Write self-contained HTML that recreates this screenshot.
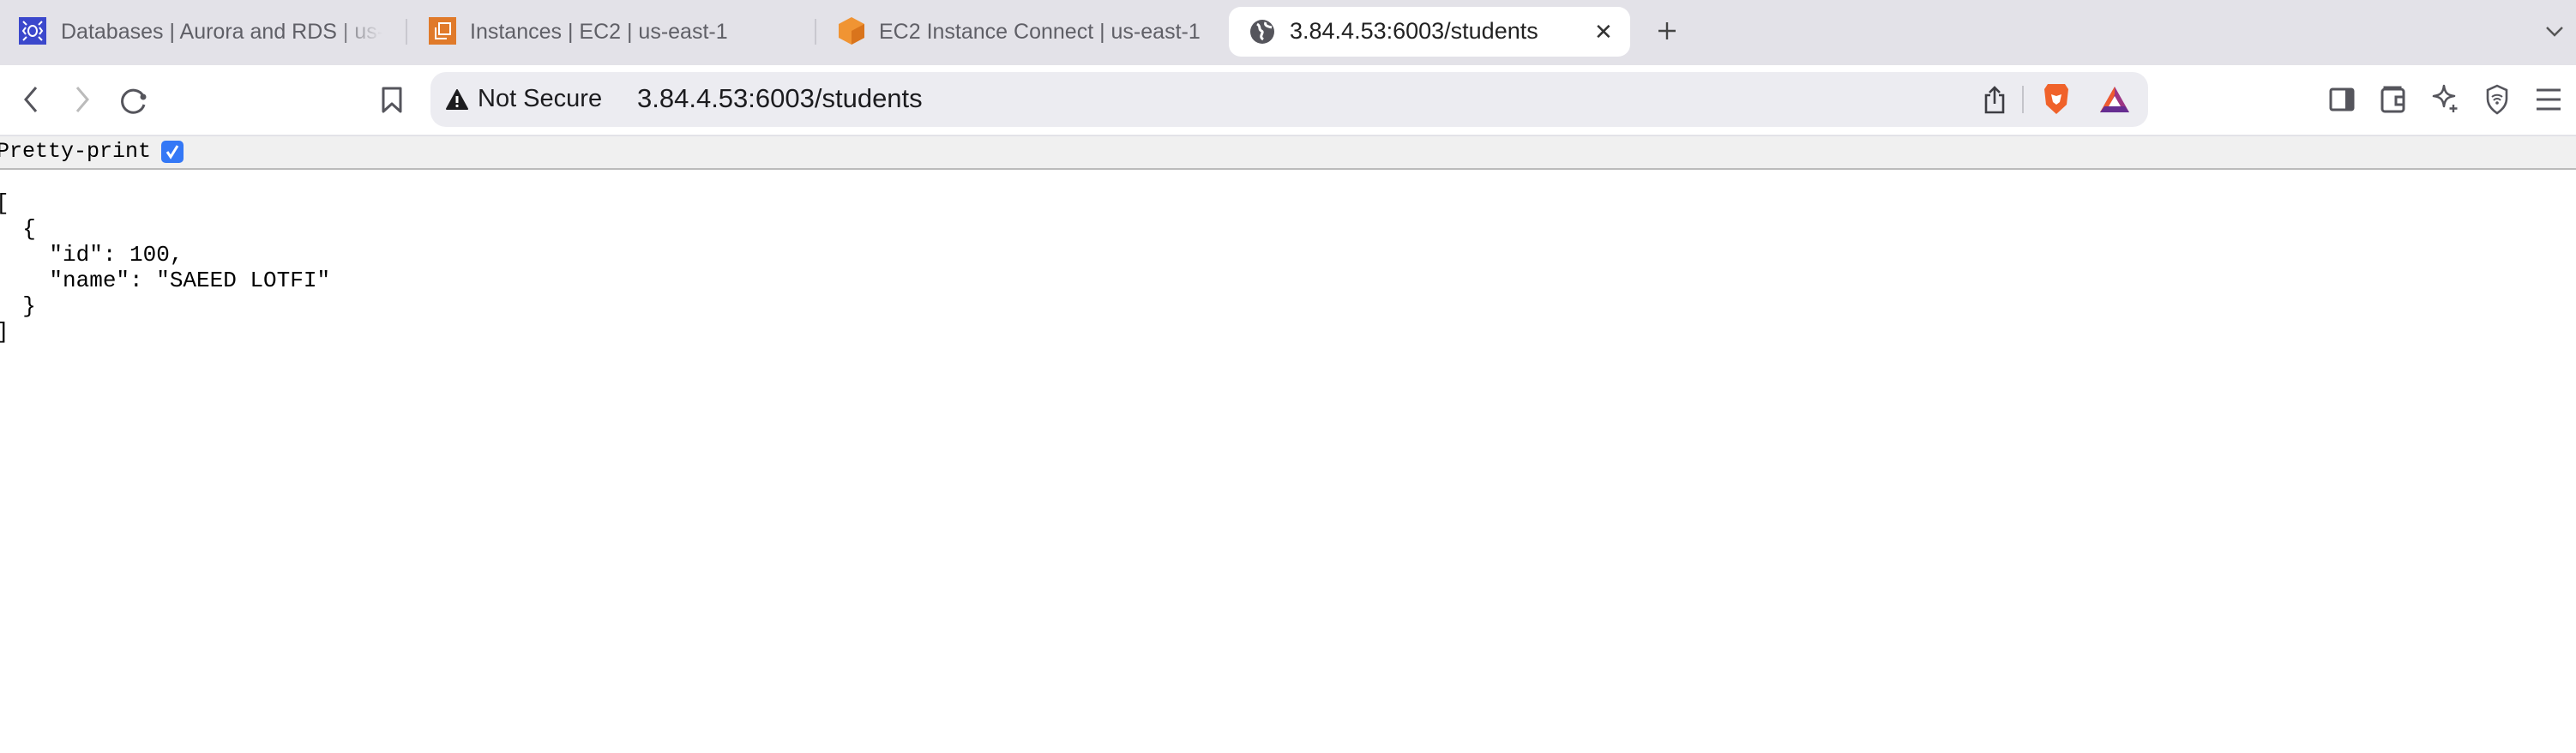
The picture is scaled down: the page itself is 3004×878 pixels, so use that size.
<!DOCTYPE html>
<html><head><meta charset="utf-8"><style>
*{margin:0;padding:0;box-sizing:border-box}
body{width:3004px;height:878px;overflow:hidden;background:#fff;font-family:"Liberation Sans",sans-serif;position:relative}
.abs{position:absolute}
#tabs{left:0;top:0;width:3004px;height:76px;background:#e3e2e8}
.tt{position:absolute;top:20px;font-size:25px;color:#5f5f66;white-space:nowrap;line-height:34px}
.sep{position:absolute;top:22px;width:2px;height:30px;background:#c9c8cf}
#tool{left:0;top:76px;width:3004px;height:80px;background:#fff}
#url{left:502px;top:84px;width:2003px;height:64px;background:#ececf1;border-radius:18px}
#pp{left:0;top:157px;width:3004px;height:41px;background:#f0f0f0;border-top:2px solid #e3e3e8;border-bottom:2px solid #bbb}
pre{position:absolute;left:-5px;top:222px;font-family:"Liberation Mono",monospace;font-size:26px;line-height:30px;color:#000}
</style></head><body>
<div id="tabs" class="abs">
 <svg class="abs" style="left:22px;top:20px" width="32" height="32"><rect width="32" height="32" fill="#3b48cc"/><ellipse cx="16" cy="16" rx="5" ry="6" fill="none" stroke="#fff" stroke-width="2"/><path d="M5 5l4 4M27 5l-4 4M5 27l4-4M27 27l-4-4M8 12l-3 4 3 4M24 12l3 4-3 4" stroke="#fff" stroke-width="2" fill="none"/></svg>
 <div class="tt" style="left:71px;width:375px;overflow:hidden;-webkit-mask-image:linear-gradient(90deg,#000 85%,transparent)">Databases | Aurora and RDS | us-east-1</div>
 <div class="sep" style="left:473px"></div>
 <svg class="abs" style="left:500px;top:20px" width="32" height="32"><rect width="32" height="32" fill="#e07a2a"/><rect x="12" y="7" width="13" height="13" fill="none" stroke="#fff" stroke-width="2"/><path d="M8 12v13h13" stroke="#fff" stroke-width="2" fill="none"/></svg>
 <div class="tt" style="left:548px">Instances | EC2 | us-east-1</div>
 <div class="sep" style="left:950px"></div>
 <svg class="abs" style="left:977px;top:19px" width="32" height="34"><path d="M16 1L31 9v16L16 33 1 25V9z" fill="#f09433"/><path d="M16 17L31 9v16L16 33z" fill="#d9741c"/></svg>
 <div class="tt" style="left:1025px">EC2 Instance Connect | us-east-1</div>
 <div class="abs" style="left:1433px;top:8px;width:468px;height:58px;background:#fff;border-radius:14px"></div>
 <svg class="abs" style="left:1457px;top:22px" width="30" height="30"><circle cx="15" cy="15" r="14" fill="#55555c"/><path d="M9 6c5 3 1 6 5 8s-4 6 2 10M19 4c-2 4 3 5 7 6" stroke="#fff" stroke-width="3" fill="none"/></svg>
 <div class="tt" style="left:1504px;color:#222;font-size:27px;top:19px">3.84.4.53:6003/students</div>
 <div class="tt" style="left:1859px;color:#333;font-size:26px">✕</div>
 <svg class="abs" style="left:1932px;top:24px" width="24" height="24"><path d="M12 2v20M2 12h20" stroke="#444" stroke-width="2.4"/></svg>
 <svg class="abs" style="left:2968px;top:30px" width="22" height="14"><path d="M2 2l9 9 9-9" stroke="#555" stroke-width="2.4" fill="none"/></svg>
</div>
<div id="tool" class="abs">
 <svg class="abs" style="left:26px;top:24px" width="20" height="32"><path d="M16 2L4 16l12 14" stroke="#55555c" stroke-width="3" fill="none"/></svg>
 <svg class="abs" style="left:86px;top:24px" width="20" height="32"><path d="M4 2l12 14L4 30" stroke="#bbb" stroke-width="3" fill="none"/></svg>
 <svg class="abs" style="left:140px;top:24px" width="34" height="34"><path d="M27 12A13 13 0 1 0 28 22" stroke="#55555c" stroke-width="3" fill="none"/><circle cx="27" cy="13" r="3.5" fill="#55555c"/></svg>
 <svg class="abs" style="left:444px;top:24px" width="26" height="32"><path d="M3 3h20v27l-10-9-10 9z" stroke="#55555c" stroke-width="3" fill="none" stroke-linejoin="round"/></svg>
</div>
<div id="url" class="abs"></div>
<svg class="abs" style="left:520px;top:104px" width="26" height="24"><path d="M13 1L25 23H1z" fill="#1c1c1f" stroke="#1c1c1f" stroke-linejoin="round" stroke-width="2"/><path d="M13 8v8" stroke="#fff" stroke-width="3"/><circle cx="13" cy="19.5" r="1.6" fill="#fff"/></svg>
<div class="abs" style="left:557px;top:97px;font-size:29px;line-height:36px;color:#1c1c1f">Not Secure</div>
<div class="abs" style="left:743px;top:96px;font-size:31px;line-height:38px;color:#1c1c1f">3.84.4.53:6003/students</div>
<svg class="abs" style="left:2312px;top:99px" width="28" height="34"><path d="M9 12H4v20h20V12h-5M14 22V3M8 9l6-6 6 6" stroke="#3c3c42" stroke-width="2.6" fill="none"/></svg>
<div class="abs" style="left:2358px;top:100px;width:2px;height:32px;background:#c4c4ca"></div>
<svg class="abs" style="left:2382px;top:96px" width="32" height="38"><path d="M6 2h20l4 6-2 18-12 11L4 26 2 8z" fill="#f0622a"/><path d="M10 14l6 2 6-2-2 9-4 3-4-3z" fill="#fff"/></svg>
<svg class="abs" style="left:2448px;top:100px" width="36" height="32"><path d="M18 1L35 31H1z" fill="#9c3584"/><path d="M18 1L1 31h8L18 10z" fill="#ef5b2f"/><path d="M1 31h34l-5-7H6z" fill="#662d91"/><path d="M18 12l7 12H11z" fill="#fff"/></svg>
<svg class="abs" style="left:2716px;top:102px" width="30" height="28"><rect x="2" y="2" width="26" height="24" rx="2" fill="none" stroke="#55555c" stroke-width="3"/><rect x="19" y="2" width="9" height="24" fill="#55555c"/></svg>
<svg class="abs" style="left:2776px;top:100px" width="30" height="32"><rect x="2" y="4" width="25" height="26" rx="3" fill="none" stroke="#55555c" stroke-width="3"/><path d="M5 4V2h18v2M27 13h-9v9h9" stroke="#55555c" stroke-width="3" fill="none"/></svg>
<svg class="abs" style="left:2836px;top:98px" width="32" height="36"><path d="M14 2c1 8 4 11 12 12-8 1-11 4-12 12-1-8-4-11-12-12 8-1 11-4 12-12z" fill="none" stroke="#55555c" stroke-width="2.6" stroke-linejoin="round"/><path d="M25 24v9M20.5 28.5h9" stroke="#55555c" stroke-width="2.4"/></svg>
<svg class="abs" style="left:2898px;top:98px" width="28" height="36"><path d="M14 2l11 5v10c0 8-5 13-11 17C8 30 3 25 3 17V7z" fill="none" stroke="#55555c" stroke-width="2.6"/><path d="M8 15a9 9 0 0 1 12 0M10 19a5 5 0 0 1 8 0" stroke="#55555c" stroke-width="2" fill="none"/><circle cx="14" cy="22" r="1.8" fill="#55555c"/></svg>
<svg class="abs" style="left:2957px;top:102px" width="30" height="28"><path d="M1 3h28M1 14h28M1 25h28" stroke="#55555c" stroke-width="3"/></svg>
<div id="pp" class="abs">
 <div class="abs" style="left:-4px;top:2px;font-family:'Liberation Mono',monospace;font-size:25px;line-height:32px;color:#000">Pretty-print</div>
 <div class="abs" style="left:188px;top:5px;width:26px;height:26px;background:#3478f6;border-radius:5px"><svg width="26" height="26"><path d="M7 13l4 6 8-13" stroke="#fff" stroke-width="3" fill="none"/></svg></div>
</div>
<pre>[
  {
    "id": 100,
    "name": "SAEED LOTFI"
  }
]</pre>
</body></html>
